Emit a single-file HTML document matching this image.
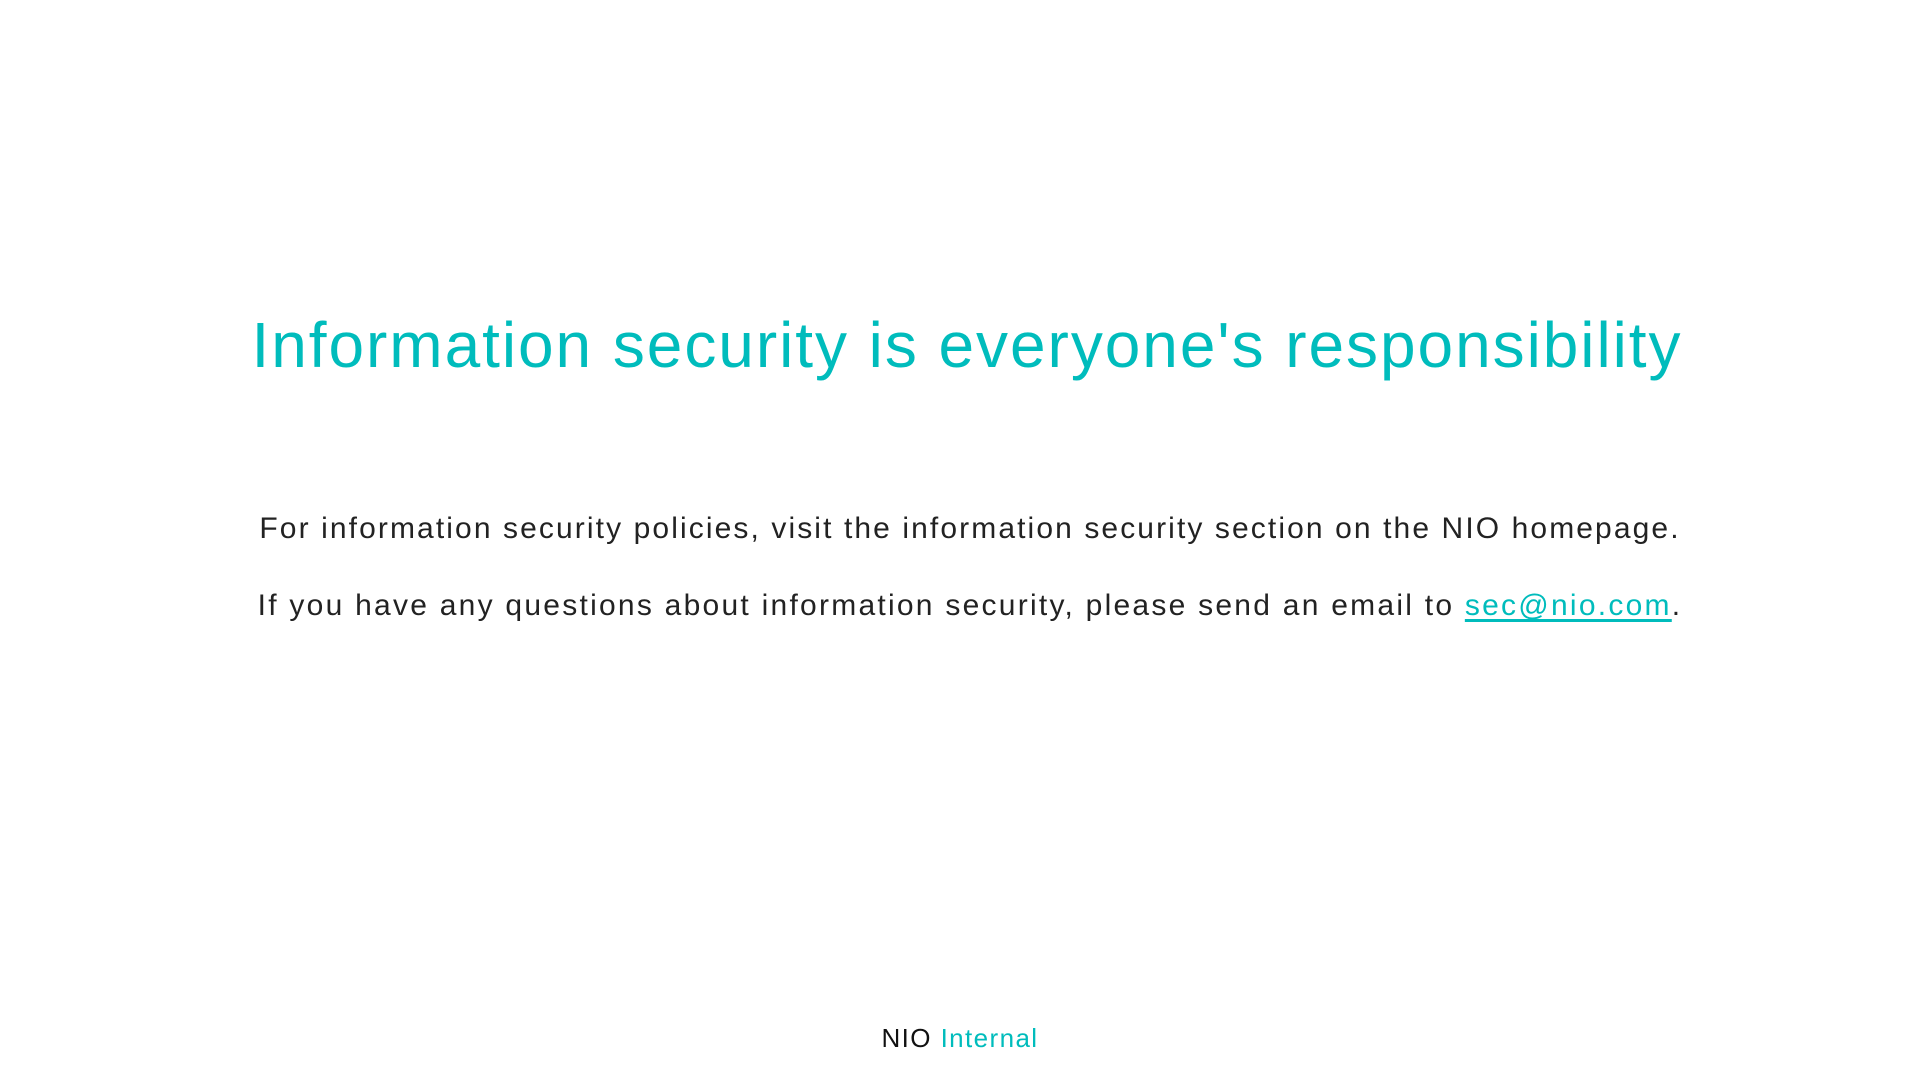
<!DOCTYPE html>
<html><head><meta charset="utf-8"><style>
html,body{margin:0;padding:0;background:#fff;width:1920px;height:1080px;overflow:hidden;font-family:"Liberation Sans",sans-serif;}
.h{position:absolute;top:305px;left:7px;width:1920px;text-align:center;color:#00bcbc;font-size:64px;letter-spacing:1.95px;line-height:80px;white-space:nowrap;}
.p{position:absolute;left:10px;width:1920px;text-align:center;color:#222;font-size:30px;letter-spacing:2.1px;line-height:40px;white-space:nowrap;}
.p a{color:#00bcbc;text-decoration:underline;text-underline-offset:4px;}
.f{position:absolute;top:1022px;left:0;width:1920px;text-align:center;font-size:26px;letter-spacing:1.4px;line-height:32px;color:#111;}
.f span{color:#00bcbc;}
</style></head><body>
<div class="h">Information security is everyone's responsibility</div>
<div class="p" style="top:509px">For information security policies, visit the information security section on the NIO homepage.</div>
<div class="p" style="top:586px;letter-spacing:2.25px">If you have any questions about information security, please send an email to <a>sec@nio.com</a>.</div>
<div class="f">NIO <span>Internal</span></div>
</body></html>
